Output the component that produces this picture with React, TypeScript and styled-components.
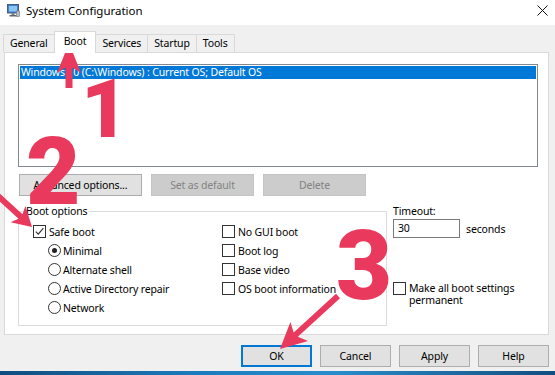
import styled, { createGlobalStyle } from "styled-components";

const GlobalStyle = createGlobalStyle`
	html, body {
		margin: 0;
		padding: 0;
		background: #f0f0f0;
	}
`;

const RED = "#e9395d";

type Pt = [number, number];

// builds an arrow outline from tail to tip
function arrowPoints(tail: Pt, tip: Pt, shaft: number, headLen: number, headW: number) {
	const [x1, y1] = tail;
	const [x2, y2] = tip;
	const len = Math.hypot(x2 - x1, y2 - y1);
	const ux = (x2 - x1) / len;
	const uy = (y2 - y1) / len;
	const px = -uy;
	const py = ux;
	const bx = x2 - ux * headLen;
	const by = y2 - uy * headLen;
	const jx = bx + ux * headLen * 0.18;
	const jy = by + uy * headLen * 0.18;
	const s = shaft / 2;
	const h = headW / 2;
	const pts: Pt[] = [
		[x1 + px * s, y1 + py * s],
		[jx + px * s, jy + py * s],
		[bx + px * h, by + py * h],
		[x2, y2],
		[bx - px * h, by - py * h],
		[jx - px * s, jy - py * s],
		[x1 - px * s, y1 - py * s],
	];
	return pts.map((p) => p[0].toFixed(1) + "," + p[1].toFixed(1)).join(" ");
}

const arrows = [
	{ tail: [69, 88] as Pt, tip: [69, 43] as Pt, shaft: 7, headLen: 30, headW: 24 },
	{ tail: [-3, 195] as Pt, tip: [32, 227] as Pt, shaft: 6, headLen: 19, headW: 22 },
	{ tail: [338, 296] as Pt, tip: [280, 349] as Pt, shaft: 6, headLen: 26, headW: 26 },
];

const tabs = ["General", "Boot", "Services", "Startup", "Tools"];

function Check({ checked }: { checked?: boolean }) {
	return (
		<CheckBox>
			{checked && (
				<svg width="11" height="11" viewBox="0 0 11 11">
					<path d="M1.8 5.6 L4.3 8.2 L9.4 2.2" fill="none" stroke="#333" strokeWidth="1.2" />
				</svg>
			)}
		</CheckBox>
	);
}

function App() {
	return (
		<>
			<GlobalStyle />
			<Window>
				<TitleBar>
					<svg width="13" height="15" viewBox="0 0 13 15">
						<rect x="0.5" y="1.5" width="11" height="8.5" fill="#3d7fd0" stroke="#4a5d7a" />
						<rect x="2" y="3" width="8" height="5.5" fill="#8cc4f2" />
						<rect x="4.5" y="10" width="3" height="2" fill="#7a8290" />
						<rect x="2.5" y="12" width="7" height="1.5" fill="#5d6470" />
						<rect x="9.5" y="8" width="3" height="5.5" fill="#b8bcc4" stroke="#6d737d" strokeWidth="0.6" />
					</svg>
					<Title>System Configuration</Title>
					<CloseButton>
						<svg width="11" height="11" viewBox="0 0 11 11">
							<path d="M0.5 0.5 L10.5 10.5 M10.5 0.5 L0.5 10.5" stroke="#111" strokeWidth="1" />
						</svg>
					</CloseButton>
				</TitleBar>

				<Body>
					<TabStrip>
						{tabs.map((t) => (
							<Tab key={t} active={t === "Boot"}>
								{t}
							</Tab>
						))}
					</TabStrip>

					<Panel>
						<ListBox>
							<ListRow selected>Windows 10 (C:\Windows) : Current OS; Default OS</ListRow>
						</ListBox>

						<ButtonRow>
							<WinButton width={123}>Advanced options...</WinButton>
							<WinButton width={103} disabled>
								Set as default
							</WinButton>
							<WinButton width={103} disabled>
								Delete
							</WinButton>
						</ButtonRow>

						<Lower>
							<GroupBox>
								<Legend>Boot options</Legend>
								<OptionsGrid>
									<Column>
										<Option>
											<Check checked />
											Safe boot
										</Option>
										<RadioOption>
											<Radio checked />
											Minimal
										</RadioOption>
										<RadioOption>
											<Radio />
											Alternate shell
										</RadioOption>
										<RadioOption>
											<Radio />
											Active Directory repair
										</RadioOption>
										<RadioOption>
											<Radio />
											Network
										</RadioOption>
									</Column>
									<Column>
										<Option>
											<Check />
											No GUI boot
										</Option>
										<Option>
											<Check />
											Boot log
										</Option>
										<Option>
											<Check />
											Base video
										</Option>
										<Option>
											<Check />
											OS boot information
										</Option>
									</Column>
								</OptionsGrid>
							</GroupBox>

							<SideColumn>
								<Label>Timeout:</Label>
								<TimeoutRow>
									<TextInput>30</TextInput>
									<span>seconds</span>
								</TimeoutRow>
								<PermanentOption>
									<Check />
									<span>
										Make all boot settings
										<br />
										permanent
									</span>
								</PermanentOption>
							</SideColumn>
						</Lower>
					</Panel>

					<Footer>
						<WinButton width={71} primary>
							OK
						</WinButton>
						<WinButton width={71}>Cancel</WinButton>
						<WinButton width={71}>Apply</WinButton>
						<WinButton width={71}>Help</WinButton>
					</Footer>
				</Body>

				<Taskbar />

				<Overlay>
					<svg width="555" height="375" viewBox="0 0 555 375">
						{arrows.map((a, i) => (
							<polygon key={i} points={arrowPoints(a.tail, a.tip, a.shaft, a.headLen, a.headW)} fill={RED} />
						))}
					</svg>
					<Digit x={81} y={68} size={82}>
						1
					</Digit>
					<Digit x={26} y={125} size={94}>
						2
					</Digit>
					<Digit x={336} y={218} size={97}>
						3
					</Digit>
				</Overlay>
			</Window>
		</>
	);
}

const Window = styled.div`
	position: relative;
	width: 555px;
	height: 375px;
	background: #f0f0f0;
	font-family: "Noto Sans", "Open Sans", sans-serif;
	font-size: 10.5px;
	letter-spacing: -0.15px;
	color: #000;
	display: flex;
	flex-direction: column;
	overflow: hidden;
`;

const TitleBar = styled.div`
	height: 25px;
	box-sizing: border-box;
	padding: 0 7px 5px 7px;
	background: #fff;
	display: flex;
	align-items: center;
`;

const Title = styled.div`
	margin-left: 6px;
	font-size: 11.5px;
	letter-spacing: 0;
	color: #000;
`;

const CloseButton = styled.div`
	margin-left: auto;
	display: flex;
`;

const Body = styled.div`
	padding: 6px 6px 0 4px;
	display: flex;
	flex-direction: column;
`;

const TabStrip = styled.div`
	height: 21px;
	display: flex;
	align-items: flex-end;
	margin-left: -1px;
`;

interface TabProps {
	active?: boolean;
}

const Tab = styled.div<TabProps>`
	box-sizing: border-box;
	height: ${({ active }) => (active ? "22px" : "18px")};
	margin-bottom: ${({ active }) => (active ? "-1px" : "0")};
	padding: ${({ active }) => (active ? "2px 9px 0" : "1px 6px 0")};
	background: ${({ active }) => (active ? "#fff" : "#f0f0f0")};
	border: 1px solid #d9d9d9;
	border-bottom: none;
	margin-right: -1px;
	position: relative;
	z-index: ${({ active }) => (active ? 2 : 1)};
	line-height: 15px;
`;

const Panel = styled.div`
	height: 283px;
	box-sizing: border-box;
	background: #fff;
	border: 1px solid #d9d9d9;
	padding: 11px 10px 0 13px;
	display: flex;
	flex-direction: column;
`;

const ListBox = styled.div`
	height: 103px;
	box-sizing: border-box;
	border: 1px solid #828790;
	padding: 1px;
`;

interface RowProps {
	selected?: boolean;
}

const ListRow = styled.div<RowProps>`
	height: 13px;
	line-height: 13px;
	padding-left: 1px;
	background: ${({ selected }) => (selected ? "#0078d7" : "transparent")};
	color: ${({ selected }) => (selected ? "#fff" : "#000")};
	white-space: nowrap;
`;

const ButtonRow = styled.div`
	display: flex;
	gap: 9px;
	margin: 7px 0 0 1px;
`;

interface ButtonProps {
	width: number;
	primary?: boolean;
}

const WinButton = styled.button<ButtonProps>`
	width: ${({ width }) => width}px;
	height: 22px;
	box-sizing: border-box;
	padding: 0;
	font: inherit;
	letter-spacing: inherit;
	color: #000;
	background: #e1e1e1;
	border: ${({ primary }) => (primary ? "2px solid #0078d7" : "1px solid #adadad")};

	&:disabled {
		background: #cccccc;
		border-color: #c4c4c4;
		color: #838383;
	}
`;

const Lower = styled.div`
	display: flex;
	margin-top: 8px;
`;

const GroupBox = styled.fieldset`
	width: 369px;
	height: 122px;
	box-sizing: border-box;
	margin: 0;
	padding: 4px 0 7px 14px;
	border: 1px solid #dcdcdc;
	min-width: 0;
`;

const Legend = styled.legend`
	padding: 0 2px;
	margin-left: -9px;
	line-height: 14px;
`;

const OptionsGrid = styled.div`
	display: grid;
	grid-template-columns: 189px auto;
`;

const Column = styled.div`
	display: flex;
	flex-direction: column;
`;

const Option = styled.div`
	height: 19px;
	display: flex;
	align-items: center;
	gap: 3px;
	white-space: nowrap;
`;

const RadioOption = styled(Option)`
	padding-left: 15px;
	gap: 2px;
`;

const CheckBox = styled.span`
	width: 13px;
	height: 13px;
	box-sizing: border-box;
	border: 1px solid #333;
	background: #fff;
	display: inline-flex;
	align-items: center;
	justify-content: center;
	flex-shrink: 0;
`;

interface RadioProps {
	checked?: boolean;
}

const Radio = styled.span<RadioProps>`
	width: 13px;
	height: 13px;
	box-sizing: border-box;
	border: 1px solid #333;
	border-radius: 50%;
	background: #fff;
	display: inline-flex;
	align-items: center;
	justify-content: center;
	flex-shrink: 0;

	&::after {
		content: "";
		width: 5px;
		height: 5px;
		border-radius: 50%;
		background: ${({ checked }) => (checked ? "#222" : "transparent")};
	}
`;

const SideColumn = styled.div`
	margin-left: 6px;
	display: flex;
	flex-direction: column;
`;

const Label = styled.div`
	line-height: 14px;
`;

const TimeoutRow = styled.div`
	margin-top: 1px;
	display: flex;
	align-items: center;
	gap: 6px;
`;

const TextInput = styled.div`
	width: 67px;
	height: 19px;
	box-sizing: border-box;
	border: 1px solid #7a7a7a;
	padding-left: 4px;
	line-height: 17px;
	background: #fff;
`;

const PermanentOption = styled.div`
	margin-top: 44px;
	display: flex;
	align-items: flex-start;
	gap: 3px;
	line-height: 12px;
`;

const Footer = styled.div`
	margin-top: 10px;
	display: flex;
	justify-content: flex-end;
	gap: 8px;
`;

const Taskbar = styled.div`
	margin-top: auto;
	height: 4px;
	background: linear-gradient(90deg, #0f4d7e, #1d7bbd 35%, #2a8ccc 60%, #124f80);
`;

const Overlay = styled.div`
	position: absolute;
	inset: 0;
	pointer-events: none;
`;

interface DigitProps {
	x: number;
	y: number;
	size: number;
}

const Digit = styled.span<DigitProps>`
	position: absolute;
	left: ${({ x }) => x}px;
	top: ${({ y }) => y}px;
	font-family: Roboto, "Liberation Sans", sans-serif;
	font-weight: 900;
	font-size: ${({ size }) => size}px;
	line-height: 1;
	letter-spacing: 0;
	color: ${RED};
`;

export default App;
